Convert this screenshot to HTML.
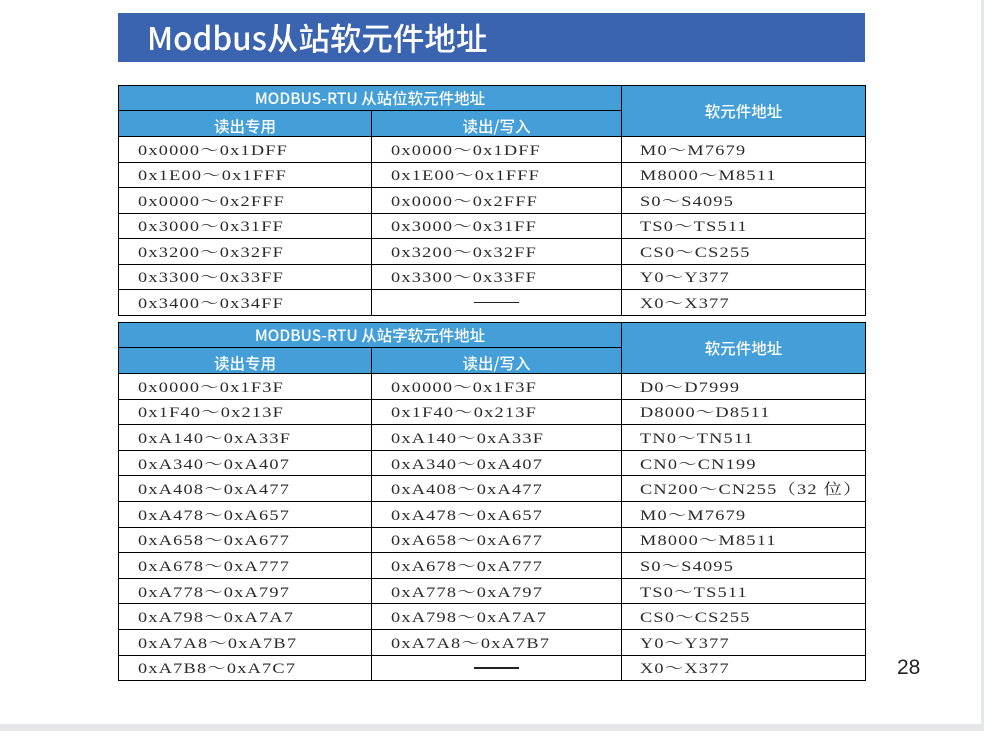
<!DOCTYPE html>
<html><head><meta charset="utf-8"><style>
html,body{margin:0;padding:0;width:984px;height:731px;background:#e4e6e9;overflow:hidden}
.page{position:absolute;left:0;top:0;width:981px;height:724px;background:#fff}
.title{position:absolute;left:118px;top:13px;width:747px;height:49px;background:#3a63b0;color:#fff;font:500 31.5px "Noto Sans CJK SC",sans-serif;line-height:49px;box-sizing:border-box;padding-left:29px}
table{position:absolute;left:118px;width:747px;border-collapse:collapse;table-layout:fixed}
td{border:1.5px solid #000;padding:0;font:15px "Liberation Serif","Noto Serif CJK SC",serif;letter-spacing:1px;color:#2a2a2a;white-space:nowrap;overflow:hidden}
td span.s{display:inline-block;transform:scaleX(1.22);transform-origin:0 50%}
td.d{padding-left:19px}
td.t{padding-left:18px}
td.h{background:#449fd8;color:#fff;text-align:center;font:500 15.5px "Noto Sans CJK SC",sans-serif;letter-spacing:0}
td.h2{padding-top:4px;line-height:20px}
td.c{text-align:center}
.dash{display:inline-block;width:45px;height:1.3px;background:#222;vertical-align:middle}
.num{position:absolute;left:897px;top:656px;font:21px "Liberation Sans",sans-serif;color:#222}
</style></head><body><div class="page">
<div class="title">Modbus从站软元件地址</div>
<table style="top:85px">
<colgroup><col style="width:253px"><col style="width:250px"><col style="width:244px"></colgroup>
<tr style="height:25px"><td class="h" colspan="2">MODBUS-RTU 从站位软元件地址</td><td class="h" rowspan="2">软元件地址</td></tr>
<tr style="height:26px"><td class="h h2">读出专用</td><td class="h h2">读出/写入</td></tr>
<tr style="height:25.5px"><td class="d"><span class="s">0x0000～0x1DFF</span></td><td class="d"><span class="s">0x0000～0x1DFF</span></td><td class="t"><span class="s">M0～M7679</span></td></tr>
<tr style="height:25.5px"><td class="d"><span class="s">0x1E00～0x1FFF</span></td><td class="d"><span class="s">0x1E00～0x1FFF</span></td><td class="t"><span class="s">M8000～M8511</span></td></tr>
<tr style="height:25.5px"><td class="d"><span class="s">0x0000～0x2FFF</span></td><td class="d"><span class="s">0x0000～0x2FFF</span></td><td class="t"><span class="s">S0～S4095</span></td></tr>
<tr style="height:25.5px"><td class="d"><span class="s">0x3000～0x31FF</span></td><td class="d"><span class="s">0x3000～0x31FF</span></td><td class="t"><span class="s">TS0～TS511</span></td></tr>
<tr style="height:25.5px"><td class="d"><span class="s">0x3200～0x32FF</span></td><td class="d"><span class="s">0x3200～0x32FF</span></td><td class="t"><span class="s">CS0～CS255</span></td></tr>
<tr style="height:25.5px"><td class="d"><span class="s">0x3300～0x33FF</span></td><td class="d"><span class="s">0x3300～0x33FF</span></td><td class="t"><span class="s">Y0～Y377</span></td></tr>
<tr style="height:25.5px"><td class="d"><span class="s">0x3400～0x34FF</span></td><td class="c"><span class="dash"></span></td><td class="t"><span class="s">X0～X377</span></td></tr>
</table>
<table style="top:322px">
<colgroup><col style="width:253px"><col style="width:250px"><col style="width:244px"></colgroup>
<tr style="height:25px"><td class="h" colspan="2">MODBUS-RTU 从站字软元件地址</td><td class="h" rowspan="2">软元件地址</td></tr>
<tr style="height:26px"><td class="h h2">读出专用</td><td class="h h2">读出/写入</td></tr>
<tr style="height:25.6px"><td class="d"><span class="s">0x0000～0x1F3F</span></td><td class="d"><span class="s">0x0000～0x1F3F</span></td><td class="t"><span class="s">D0～D7999</span></td></tr>
<tr style="height:25.6px"><td class="d"><span class="s">0x1F40～0x213F</span></td><td class="d"><span class="s">0x1F40～0x213F</span></td><td class="t"><span class="s">D8000～D8511</span></td></tr>
<tr style="height:25.6px"><td class="d"><span class="s">0xA140～0xA33F</span></td><td class="d"><span class="s">0xA140～0xA33F</span></td><td class="t"><span class="s">TN0～TN511</span></td></tr>
<tr style="height:25.6px"><td class="d"><span class="s">0xA340～0xA407</span></td><td class="d"><span class="s">0xA340～0xA407</span></td><td class="t"><span class="s">CN0～CN199</span></td></tr>
<tr style="height:25.6px"><td class="d"><span class="s">0xA408～0xA477</span></td><td class="d"><span class="s">0xA408～0xA477</span></td><td class="t"><span class="s">CN200～CN255（32 位）</span></td></tr>
<tr style="height:25.6px"><td class="d"><span class="s">0xA478～0xA657</span></td><td class="d"><span class="s">0xA478～0xA657</span></td><td class="t"><span class="s">M0～M7679</span></td></tr>
<tr style="height:25.6px"><td class="d"><span class="s">0xA658～0xA677</span></td><td class="d"><span class="s">0xA658～0xA677</span></td><td class="t"><span class="s">M8000～M8511</span></td></tr>
<tr style="height:25.6px"><td class="d"><span class="s">0xA678～0xA777</span></td><td class="d"><span class="s">0xA678～0xA777</span></td><td class="t"><span class="s">S0～S4095</span></td></tr>
<tr style="height:25.6px"><td class="d"><span class="s">0xA778～0xA797</span></td><td class="d"><span class="s">0xA778～0xA797</span></td><td class="t"><span class="s">TS0～TS511</span></td></tr>
<tr style="height:25.6px"><td class="d"><span class="s">0xA798～0xA7A7</span></td><td class="d"><span class="s">0xA798～0xA7A7</span></td><td class="t"><span class="s">CS0～CS255</span></td></tr>
<tr style="height:25.6px"><td class="d"><span class="s">0xA7A8～0xA7B7</span></td><td class="d"><span class="s">0xA7A8～0xA7B7</span></td><td class="t"><span class="s">Y0～Y377</span></td></tr>
<tr style="height:25.6px"><td class="d"><span class="s">0xA7B8～0xA7C7</span></td><td class="c"><span class="dash"></span></td><td class="t"><span class="s">X0～X377</span></td></tr>
</table>
<div class="num">28</div>
</div></body></html>
